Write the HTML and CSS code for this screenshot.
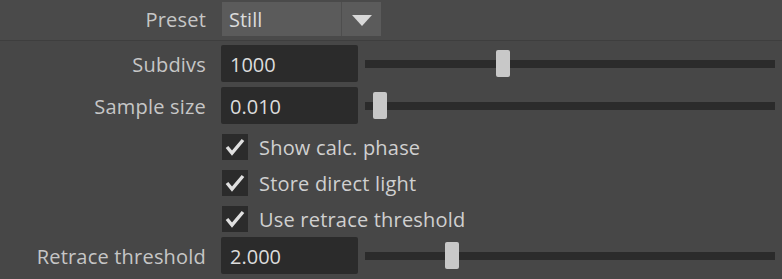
FILE: index.html
```html
<!DOCTYPE html>
<html>
<head>
	<meta charset="utf-8">
	<title>Light cache</title>
	<link rel="stylesheet" href="styles.css">
</head>
<body>
<!-- 属性面板 -->
	<div class="panel">
		<!-- 预设 -->
		<div class="head">
			<div class="row preset">
				<span class="label">Preset</span>
				<div class="combo">
					<span class="combo-text">Still</span>
					<span class="combo-arrow"></span>
				</div>
			</div>
		</div>
		<div class="body">
			<div class="row field">
				<span class="label">Subdivs</span>
				<div class="num">1000</div>
				<div class="slider"><div class="track"></div><div class="thumb" style="left: 131px"></div></div>
			</div>
			<div class="row field">
				<span class="label">Sample size</span>
				<div class="num">0.010</div>
				<div class="slider"><div class="track"></div><div class="thumb" style="left: 8px"></div></div>
			</div>
			<!-- 复选框 -->
			<div class="row check">
				<span class="label"></span>
				<span class="box"><svg viewBox="0 0 26 26"><polyline points="5,13 10,19 21,6"/></svg></span>
				<span class="check-text">Show calc. phase</span>
			</div>
			<div class="row check">
				<span class="label"></span>
				<span class="box"><svg viewBox="0 0 26 26"><polyline points="5,13 10,19 21,6"/></svg></span>
				<span class="check-text">Store direct light</span>
			</div>
			<div class="row check">
				<span class="label"></span>
				<span class="box"><svg viewBox="0 0 26 26"><polyline points="5,13 10,19 21,6"/></svg></span>
				<span class="check-text">Use retrace threshold</span>
			</div>
			<div class="row field">
				<span class="label">Retrace threshold</span>
				<div class="num">2.000</div>
				<div class="slider"><div class="track"></div><div class="thumb" style="left: 80px"></div></div>
			</div>
		</div>
	</div>
</body>
</html>
```

FILE: styles.css
```css
*{margin: 0px;padding: 0px;box-sizing: border-box;}
html,body{
	width: 100%;
	height: 100%;
	background: #474747;
}
body{
	font-family: "Open Sans", "Noto Sans", sans-serif;
	font-size: 20px;
	color: #c6c6c6;
	overflow: hidden;
}
.panel{
	width: 782px;
}
.head{
	height: 41px;
	padding-top: 2px;
	background: #4a4a4a;
	border-bottom: 1px solid #3e3e3e;
}
.body{
	padding-top: 4px;
}
.row{
	display: flex;
	align-items: center;
}
.label{
	width: 206px;
	flex: none;
	text-align: right;
	margin-right: 15px;
	padding-top: 1px;
	white-space: nowrap;
	letter-spacing: 0.2px;
}
/* 下拉框 */
.combo{
	display: flex;
	width: 159px;
	height: 34px;
	background: #5b5b5b;
	margin-left: 1px;
}
.combo-text{
	flex: 1;
	line-height: 36px;
	padding-left: 7px;
	color: #dcdcdc;
	border-right: 1px solid #4e4e4e;
}
.combo-arrow{
	width: 39px;
	position: relative;
}
.combo-arrow::after{
	content: "";
	position: absolute;
	left: 10px;
	top: 13px;
	border-left: 10px solid transparent;
	border-right: 10px solid transparent;
	border-top: 11px solid #d8d8d8;
}
/* 数值框 + 滑块 */
.field{
	height: 37px;
	margin-bottom: 5px;
}
.num{
	width: 137px;
	height: 37px;
	line-height: 39px;
	padding-left: 9px;
	background: #2b2b2b;
	color: #dcdcdc;
	border-radius: 2px;
}
.slider{
	position: relative;
	margin-left: 7px;
	width: 410px;
	height: 37px;
}
.track{
	position: absolute;
	left: 0px;
	right: 0px;
	top: 15px;
	height: 8px;
	background: #2b2b2b;
}
.thumb{
	position: absolute;
	top: 5px;
	width: 14px;
	height: 27px;
	background: #c8c8c8;
	border-radius: 2px;
}
/* 复选框 */
.check{
	height: 36px;
	margin-left: 1px;
}
.box{
	width: 26px;
	height: 26px;
	background: #2b2b2b;
}
.box svg{
	display: block;
	width: 26px;
	height: 26px;
}
.box polyline{
	fill: none;
	stroke: #e0e0e0;
	stroke-width: 3.4;
}
.check-text{
	margin-left: 11px;
	letter-spacing: 0.2px;
	color: #d0d0d0;
}
```
